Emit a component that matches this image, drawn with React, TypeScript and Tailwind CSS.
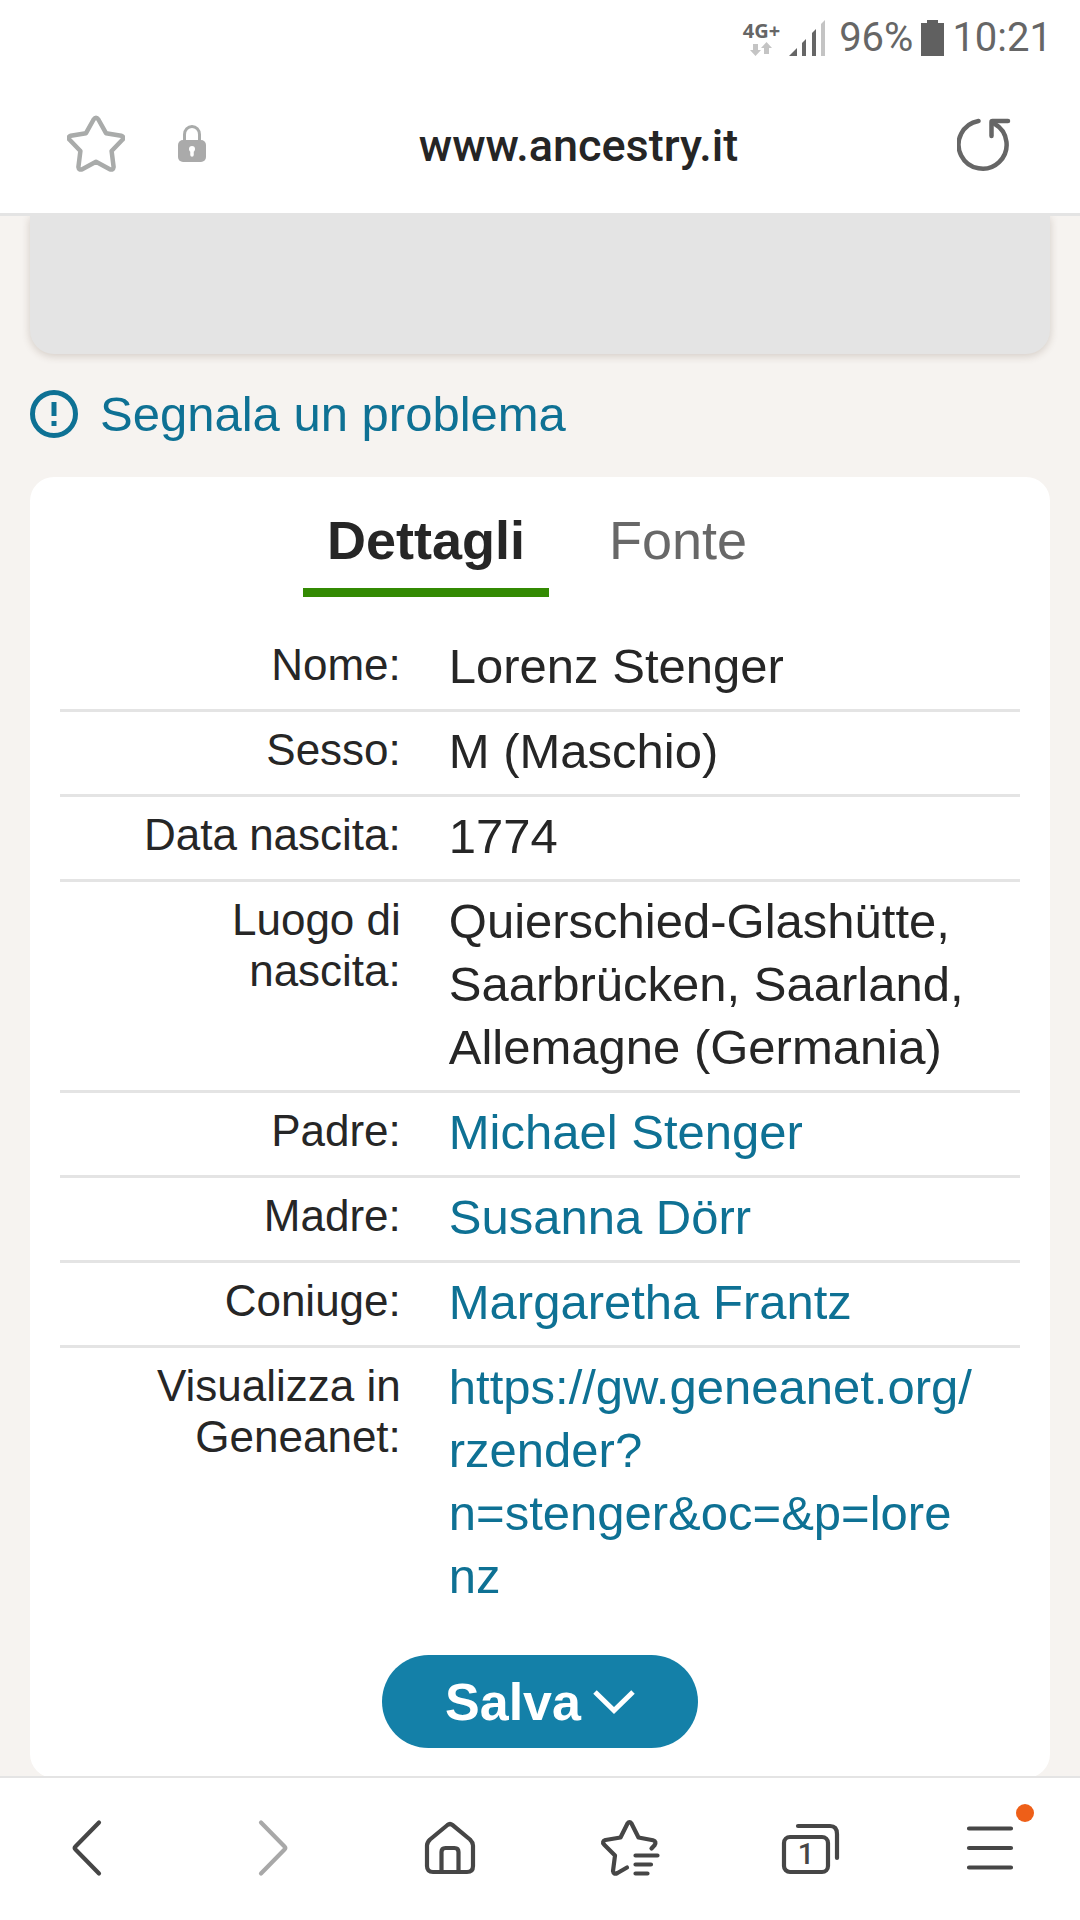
import type { ReactNode } from "react";

type Detail = {
  label: string;
  value: string;
  href?: string;
};

const DETAILS: Detail[] = [
  { label: "Nome:", value: "Lorenz Stenger" },
  { label: "Sesso:", value: "M (Maschio)" },
  { label: "Data nascita:", value: "1774" },
  {
    label: "Luogo di nascita:",
    value: "Quierschied-Glashütte, Saarbrücken, Saarland, Allemagne (Germania)",
  },
  { label: "Padre:", value: "Michael Stenger", href: "#padre" },
  { label: "Madre:", value: "Susanna Dörr", href: "#madre" },
  { label: "Coniuge:", value: "Margaretha Frantz", href: "#coniuge" },
  {
    label: "Visualizza in Geneanet:",
    value: "https://gw.geneanet.org/rzender?n=stenger&oc=&p=lorenz",
    href: "#geneanet",
  },
];

function StatusBar() {
  return (
    <div className="flex h-[76px] items-center justify-end pr-[28px] text-[#666666]">
      <div className="mr-[9px] flex flex-col items-center">
        <span className="font-['Open_Sans',sans-serif] text-[20px] leading-[22px] font-bold">
          4G+
        </span>
        <svg width="22" height="14" viewBox="0 0 22 14" fill="#c4c4c4" aria-hidden>
          <path d="M3 2h5v6h3l-5.500 6L0 8h3z" />
          <path d="M14 12h5V6h3l-5.500-6L11 6h3z" />
        </svg>
      </div>
      <svg
        className="mr-[14px]"
        width="36"
        height="36"
        viewBox="0 0 36 36"
        fill="currentColor"
        aria-hidden
      >
        <path d="M0 36 8 28v8z" />
        <path d="M13 23l4-4v17h-4z" />
        <path d="M23 13l4-4v27h-4z" />
        <path d="M32 4l4-4v36h-4z" fill="#c4c4c4" />
      </svg>
      <span className="text-[40px] leading-[44px]">96%</span>
      <svg
        className="mx-[8px]"
        width="23"
        height="36"
        viewBox="0 0 23 36"
        fill="#606060"
        aria-hidden
      >
        <path d="M6 0h11v3h6v33H0V3h6z" />
      </svg>
      <span className="text-[40px] leading-[44px]">10:21</span>
    </div>
  );
}

function AddressBar() {
  return (
    <div className="flex h-[137px] items-center justify-between pr-[69px] pb-[1px] pl-[67px]">
      <div className="flex items-center gap-[53px]">
        <button type="button" aria-label="Aggiungi ai preferiti">
          <svg
            width="58"
            height="58"
            viewBox="0 0 58 58"
            fill="none"
            stroke="#a9abaa"
            strokeWidth="4.500"
            strokeLinejoin="round"
          >
            <path d="M26.600 4.500q2.400-3.600 4.800 0L39 18.200l15.200 2.500q3.600 1.200 1.200 4.100L44.600 36l2 16q-.4 3.500-3.800 2.300L29 46.800l-13.800 7.500q-3.400 1.200-3.800-2.300l2-16L2.600 24.800q-2.400-2.900 1.200-4.100L19 18.200z" />
          </svg>
        </button>
        <svg width="28" height="38" viewBox="0 0 28 38" fill="none" aria-hidden>
          <path d="M6.500 16V9.500a7.500 8 0 0 1 15 0V16" stroke="#a9abaa" strokeWidth="3" />
          <rect y="15" width="28" height="22" rx="5" fill="#aaaaaa" />
          <circle cx="14" cy="24" r="3" fill="#fff" />
          <path d="M14 24v6" stroke="#fff" strokeWidth="3.500" strokeLinecap="round" />
        </svg>
      </div>
      <span className="pt-[3px] pr-[6px] text-[45px] leading-[52px] font-medium text-[#252525]">
        www.ancestry.it
      </span>
      <button type="button" aria-label="Ricarica">
        <svg
          width="54"
          height="54"
          viewBox="0 0 54 54"
          fill="none"
          stroke="#666666"
          strokeWidth="4.500"
          strokeLinecap="round"
          strokeLinejoin="round"
        >
          <path d="M21.500 4A24 24 0 1 0 37.500 6.800" />
          <path d="M34.500 19V5q0-1 1-1H51" />
        </svg>
      </button>
    </div>
  );
}

function DetailsTable() {
  return (
    <table className="w-full table-fixed border-collapse">
      <tbody>
        {DETAILS.map((item) => (
          <tr
            key={item.label}
            className="border-b-[3px] border-[#e4e4e4] align-top last:border-b-0"
          >
            <th
              scope="row"
              className="w-[38%] pt-[12px] pr-6 pl-16 text-right text-[44px] leading-[51px] font-normal"
            >
              {item.label}
            </th>
            <td className="pt-[8px] pr-12 pb-[11px] pl-6 text-[49px] leading-[63px] break-words">
              {item.href ? (
                <a href={item.href} className="text-[#0e7194]">
                  {item.value}
                </a>
              ) : (
                item.value
              )}
            </td>
          </tr>
        ))}
      </tbody>
    </table>
  );
}

type NavButtonProps = {
  label: string;
  disabled?: boolean;
  children: ReactNode;
};

function NavButton({ label, disabled, children }: NavButtonProps) {
  return (
    <button
      type="button"
      aria-label={label}
      disabled={disabled}
      className="flex h-full items-center justify-center pb-[2px] text-[#464646] disabled:text-[#a8a8a8]"
    >
      <span className="relative">
        <svg
          width="60"
          height="60"
          viewBox="0 0 60 60"
          fill="none"
          stroke="currentColor"
          strokeWidth="4.200"
          strokeLinecap="round"
          strokeLinejoin="round"
        >
          {children}
        </svg>
        {label === "Menu" && (
          <span className="absolute -top-[14px] right-[-14px] h-[18px] w-[18px] rounded-full bg-[#ee5f18]" />
        )}
      </span>
    </button>
  );
}

function Toolbar() {
  return (
    <nav className="grid h-[144px] shrink-0 grid-cols-6 border-t-2 border-[#e4e4e4] bg-white">
      <NavButton label="Indietro">
        <path d="M39 4.500 15.500 28.500q-1.500 1.500 0 3L39 55.500" />
      </NavButton>
      <NavButton label="Avanti" disabled>
        <path d="M21 4.500 44.500 28.500q1.500 1.500 0 3L21 55.500" />
      </NavButton>
      <NavButton label="Pagina iniziale">
        <path d="M27.500 7q2.500-2 5 0L50 21.500q3 3 3 6V48q0 6-6 6H13q-6 0-6-6V27.500q0-3 3-6z" />
        <path d="M21.500 54V34q0-4 4-4h9q4 0 4 4v20" />
      </NavButton>
      <NavButton label="Preferiti">
        <path d="M51.500 30.500l3-3.200q2.500-4-1.500-5L38.500 19.500 31.500 5.500q-2-3-4 0l-7 14L5.500 22q-4 1.500-1.500 4.500L15 37.500 13 53q.5 4 4.500 2L27 49.500" />
        <path d="M35.500 37.500h22M35.500 46.500h15.500M35.500 55.500h12" />
      </NavButton>
      <NavButton label="Schede">
        <rect x="4" y="19" width="44" height="35" rx="6" />
        <path d="M18 8h32q7 0 7 8v24" />
        <text
          x="26"
          y="46"
          textAnchor="middle"
          fill="currentColor"
          stroke="none"
          className="font-['Roboto',sans-serif] text-[29px] font-medium"
        >
          1
        </text>
      </NavButton>
      <NavButton label="Menu">
        <path d="M9 10.500h42M9 30h42M9 49.500h42" />
      </NavButton>
    </nav>
  );
}

export default function App() {
  return (
    <div className="flex h-screen flex-col bg-white font-['Liberation_Sans',Arial,sans-serif] text-[#262626]">
      <header className="shrink-0 border-b-[3px] border-[#e4e4e4] bg-white font-['Roboto',sans-serif]">
        <StatusBar />
        <AddressBar />
      </header>

      <main className="min-h-0 flex-1 overflow-hidden bg-[#f6f3f0] px-[30px]">
        <div className="h-[138px] rounded-b-[24px] bg-[#e4e4e4] shadow-[0_2px_9px_rgba(70,45,25,0.2)]" />

        <a
          href="#segnala"
          className="mt-[28px] mb-[31px] flex items-center gap-[22px] text-[49px] leading-[64px] text-[#0e7194]"
        >
          <svg
            width="48"
            height="48"
            viewBox="0 0 48 48"
            fill="none"
            stroke="currentColor"
            strokeWidth="5"
            aria-hidden
          >
            <circle cx="24" cy="24" r="21.500" />
            <path d="M24 12v14M24 31v5" />
          </svg>
          Segnala un problema
        </a>

        <section className="rounded-[24px] bg-white px-[30px] pb-[30px]">
          <div role="tablist" className="flex justify-center gap-[36px] pt-[24px] pr-[6px]">
            <button
              type="button"
              role="tab"
              aria-selected="true"
              className="border-b-[9px] border-[#338a03] px-6 pt-[12px] pb-[20px] text-[54px] leading-[55px] font-bold"
            >
              Dettagli
            </button>
            <button
              type="button"
              role="tab"
              aria-selected="false"
              className="border-b-[9px] border-transparent px-6 pt-[12px] pb-[20px] text-[54px] leading-[55px] text-[#686868]"
            >
              Fonte
            </button>
          </div>

          <div className="pt-[30px]">
            <DetailsTable />
          </div>

          <div className="flex justify-center pt-[36px]">
            <button
              type="button"
              className="flex h-[93px] items-center gap-[12px] rounded-full bg-[#1480a8] px-[63px] text-[52px] leading-[60px] font-bold text-white"
            >
              Salva
              <svg
                width="42"
                height="24"
                viewBox="0 0 42 24"
                fill="none"
                stroke="currentColor"
                strokeWidth="5"
                aria-hidden
              >
                <path d="M2 2l19 18.500L40 2" />
              </svg>
            </button>
          </div>
        </section>
      </main>

      <Toolbar />
    </div>
  );
}
